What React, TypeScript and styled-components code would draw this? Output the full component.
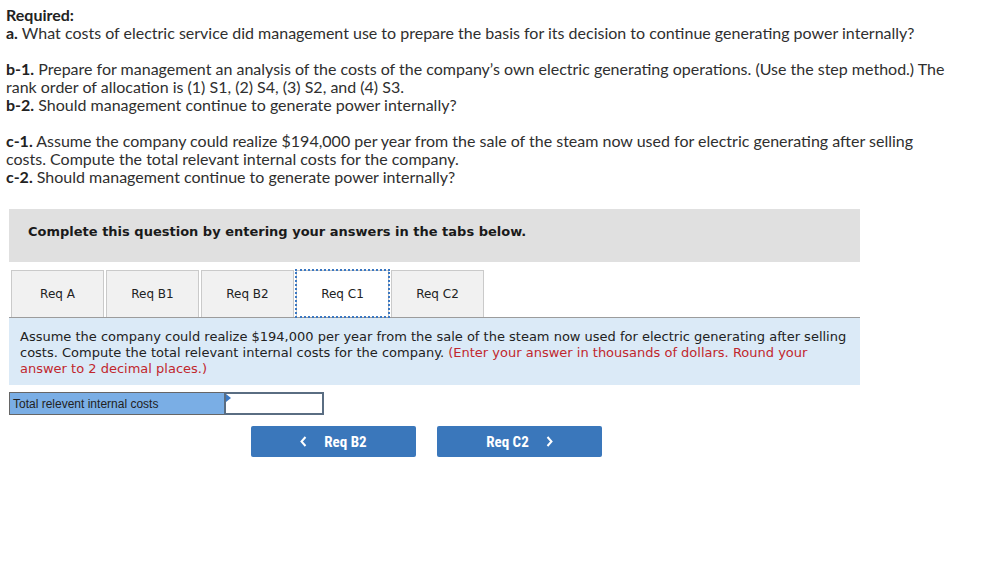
import React from "react";
import styled, { createGlobalStyle } from "styled-components";

const GlobalStyle = createGlobalStyle`
  html, body { margin: 0; padding: 0; background: #ffffff; }
  * { box-sizing: border-box; }
`;

const Page = styled.div`
  width: 981px;
  min-height: 563px;
  padding-top: 6px;
`;

const Instructions = styled.div`
  width: 958px;
  padding: 0 6px;
  font-family: Lato, "Open Sans", sans-serif;
  font-size: 16px;
  line-height: 18px;
  color: #2f2f2f;
`;

const Para = styled.p<{ $last?: boolean }>`
  margin: 0 0 ${(p) => (p.$last ? "0" : "18px")} 0;
`;

const Strong = styled.b`
  font-weight: 700;
  color: #222;
`;

const QuestionBox = styled.div`
  margin: 23px 0 0 9px;
  width: 851px;
  height: 53px;
  background: #e0e0e0;
  padding: 15px 0 0 19px;
  font-family: Verdana, "DejaVu Sans", sans-serif;
  font-size: 13px;
  line-height: 16px;
  font-weight: 700;
  color: #1a1a1a;
`;

const TabBar = styled.div`
  margin: 8px 0 0 9px;
  width: 851px;
  display: flex;
  gap: 2px;
  padding-left: 2px;
  border-bottom: 1px solid #9c9c9c;
`;

const Tab = styled.div<{ $active?: boolean }>`
  width: 93px;
  height: 47px;
  display: flex;
  align-items: center;
  justify-content: center;
  border: 1px solid #cacaca;
  border-bottom: none;
  background: ${(p) => (p.$active ? "#ffffff" : "#f1f1f1")};
  font-family: Verdana, "DejaVu Sans", sans-serif;
  font-size: 12px;
  color: #222;
  ${(p) => (p.$active ? "outline: 2px dotted #3b78c2; outline-offset: -1px;" : "")}
`;

const Panel = styled.div`
  margin-left: 9px;
  width: 851px;
  height: 67px;
  background: #dbeaf7;
  padding: 11px 11px 0 11px;
  font-family: Verdana, "DejaVu Sans", sans-serif;
  font-size: 13px;
  line-height: 16px;
  color: #222;
`;

const Hint = styled.span`
  color: #c1272d;
`;

const AnswerRow = styled.div`
  margin: 7px 0 0 9px;
  display: flex;
`;

const AnswerLabel = styled.div`
  width: 216px;
  height: 23px;
  background: #7aaee5;
  border: 1px solid #666;
  display: flex;
  align-items: center;
  padding-left: 3px;
  font-family: Arial, "Liberation Sans", sans-serif;
  font-size: 12px;
  color: #222;
`;

const AnswerInput = styled.div`
  position: relative;
  width: 100px;
  height: 23px;
  margin-left: -1px;
  background: #fff;
  border: 2px solid #5a6d82;
`;

const Marker = styled.div`
  position: absolute;
  left: 0;
  top: 0;
  width: 0;
  height: 0;
  border-top: 4px solid transparent;
  border-bottom: 4px solid transparent;
  border-left: 5px solid #3b78c2;
`;

const NavRow = styled.div`
  margin-top: 11px;
  padding-left: 251px;
  display: flex;
  gap: 21px;
`;

const NavButton = styled.div`
  width: 165px;
  height: 31px;
  background: #3a77bb;
  border-radius: 2px;
  display: flex;
  align-items: center;
  justify-content: center;
  gap: 17px;
  color: #fff;
  font-family: "Liberation Sans Narrow", "Roboto Condensed", Roboto, sans-serif;
  font-weight: 700;
  font-size: 15px;
`;

const Chevron = ({ dir }: { dir: "left" | "right" }) => (
  <svg width="7" height="11" viewBox="0 0 7 11">
    <path
      d={dir === "left" ? "M5.5 1 L1.5 5.5 L5.5 10" : "M1.5 1 L5.5 5.5 L1.5 10"}
      fill="none"
      stroke="#fff"
      strokeWidth="2"
    />
  </svg>
);

export default function App() {
  return (
    <Page>
      <GlobalStyle />
      <Instructions>
        <Para>
          <Strong>Required:</Strong>
          <br />
          <Strong>a.</Strong> What costs of electric service did management use to prepare the basis for its decision to continue generating power internally?
        </Para>
        <Para>
          <Strong>b-1.</Strong> Prepare for management an analysis of the costs of the company’s own electric generating operations. (Use the step method.) The rank order of allocation is (1) S1, (2) S4, (3) S2, and (4) S3.
          <br />
          <Strong>b-2.</Strong> Should management continue to generate power internally?
        </Para>
        <Para $last>
          <Strong>c-1.</Strong> Assume the company could realize $194,000 per year from the sale of the steam now used for electric generating after selling costs. Compute the total relevant internal costs for the company.
          <br />
          <Strong>c-2.</Strong> Should management continue to generate power internally?
        </Para>
      </Instructions>
      <QuestionBox>Complete this question by entering your answers in the tabs below.</QuestionBox>
      <TabBar>
        <Tab>Req A</Tab>
        <Tab>Req B1</Tab>
        <Tab>Req B2</Tab>
        <Tab $active>Req C1</Tab>
        <Tab>Req C2</Tab>
      </TabBar>
      <Panel>
        Assume the company could realize $194,000 per year from the sale of the steam now used for electric generating after selling costs. Compute the total relevant internal costs for the company.{" "}
        <Hint>(Enter your answer in thousands of dollars. Round your answer to 2 decimal places.)</Hint>
      </Panel>
      <AnswerRow>
        <AnswerLabel>Total relevent internal costs</AnswerLabel>
        <AnswerInput>
          <Marker />
        </AnswerInput>
      </AnswerRow>
      <NavRow>
        <NavButton>
          <Chevron dir="left" />
          <span>Req B2</span>
        </NavButton>
        <NavButton>
          <span>Req C2</span>
          <Chevron dir="right" />
        </NavButton>
      </NavRow>
    </Page>
  );
}
